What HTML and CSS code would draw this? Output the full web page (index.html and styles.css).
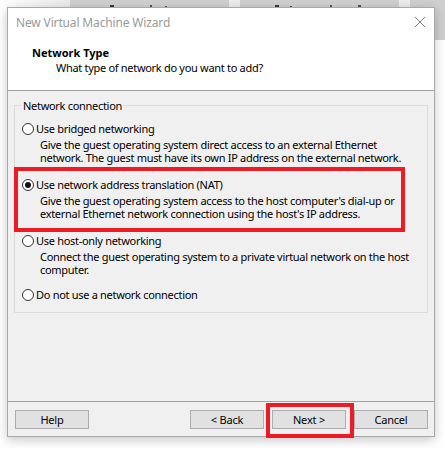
FILE: index.html
```html
<!DOCTYPE html>
<html>
<head>
<meta charset="utf-8">
<link rel="stylesheet" href="styles.css">
</head>
<body>
<div class="backdrop">
  <div class="tile tile-edge"></div>
  <div class="tile tile-a"></div>
  <div class="tile-gap"></div>
  <div class="tile tile-b"></div>
  <div class="tile-gap"></div>
  <div class="tile tile-last"></div>
</div>

<div class="dialog">
  <div class="titlebar">
    <span class="title">New Virtual Machine Wizard</span>
    <svg class="close" width="12" height="12" viewBox="0 0 12 12"><path d="M1 1 L11 11 M11 1 L1 11" stroke="#7a7a7a" stroke-width="1" fill="none"/></svg>
  </div>
  <div class="header">
    <div class="header-title">Network Type</div>
    <div class="header-sub">What type of network do you want to add?</div>
  </div>
  <div class="body">
    <fieldset class="group">
      <legend>Network connection</legend>
      <div class="option">
        <div class="radio-row"><span class="radio"></span><span>Use bridged networking</span></div>
        <div class="desc">Give the guest operating system direct access to an external Ethernet<br>network. The guest must have its own IP address on the external network.</div>
      </div>
      <div class="option">
        <div class="radio-row"><span class="radio checked"></span><span>Use network address translation (NAT)</span></div>
        <div class="desc">Give the guest operating system access to the host computer's dial-up or<br>external Ethernet network connection using the host's IP address.</div>
      </div>
      <div class="option">
        <div class="radio-row"><span class="radio"></span><span>Use host-only networking</span></div>
        <div class="desc">Connect the guest operating system to a private virtual network on the host<br>computer.</div>
      </div>
      <div class="option option-last">
        <div class="radio-row"><span class="radio"></span><span>Do not use a network connection</span></div>
      </div>
    </fieldset>
  </div>
  <div class="footer">
    <button class="btn">Help</button>
    <div class="spacer"></div>
    <button class="btn">&lt; Back</button>
    <button class="btn">Next &gt;</button>
    <button class="btn">Cancel</button>
  </div>
  <div class="mark mark-nat"></div>
  <div class="mark mark-next"></div>
</div>
</body>
</html>
```
FILE: styles.css
```css
html, body {
  margin: 0;
  padding: 0;
  background: #ffffff;
  width: 445px;
  height: 449px;
  overflow: hidden;
  font-family: "Noto Sans", "Open Sans", sans-serif;
  font-size: 11px;
  letter-spacing: -0.3px;
  color: #000;
}

.backdrop {
  display: flex;
  height: 40px;
}
.tile {
  width: 159px;
  background: #cfcfcf;
}
.tile-a {
  background:
    linear-gradient(#3a3a3a, #3a3a3a) 40px 5px / 4px 3px no-repeat,
    linear-gradient(#555, #555) 80px 5px / 2px 3px no-repeat,
    linear-gradient(#555, #555) 95px 6px / 2px 2px no-repeat,
    #cfcfcf;
}
.tile-b {
  background:
    linear-gradient(#3a3a3a, #3a3a3a) 35px 5px / 4px 3px no-repeat,
    linear-gradient(#555, #555) 50px 6px / 2px 2px no-repeat,
    linear-gradient(#555, #555) 90px 5px / 2px 3px no-repeat,
    linear-gradient(#555, #555) 118px 5px / 3px 3px no-repeat,
    #cfcfcf;
}
.tile-edge {
  width: 70px;
  background: linear-gradient(to right, #ffffff, #e9e9e9);
}
.tile-gap {
  width: 11px;
  background: #ececec;
}
.tile-last {
  flex: 1;
}

.dialog {
  position: absolute;
  left: 7px;
  top: 7px;
  width: 426px;
  height: 428px;
  border: 1px solid #a9a9a9;
  background: #f0f0f0;
  box-shadow: 0 3px 10px rgba(0,0,0,0.22);
  display: flex;
  flex-direction: column;
}

.titlebar {
  height: 29px;
  flex: none;
  background: #fff;
  display: flex;
  align-items: center;
  padding-left: 8px;
  position: relative;
}
.title {
  color: #999;
  font-size: 12px;
  letter-spacing: -0.15px;
}
.close {
  position: absolute;
  right: 8px;
  top: 8px;
}

.header {
  background: #fff;
  height: 54px;
  flex: none;
  border-bottom: 1px solid #a0a0a0;
  padding-left: 24px;
  box-sizing: border-box;
  padding-top: 8px;
}
.header-title {
  font-weight: bold;
  line-height: 15px;
  letter-spacing: 0;
}
.header-sub {
  padding-left: 24px;
  line-height: 16px;
}

.body {
  height: 310px;
  flex: none;
  padding: 0 6px;
}
.group {
  margin: 8px 0 0 0;
  padding: 10px 7px 0 7px;
  border: 1px solid #dcdcdc;
  height: 214px;
  box-sizing: border-box;
}
.group legend {
  padding: 0 1px;
  line-height: 13px;
}

.option {
  margin-bottom: 14px;
  line-height: 13px;
  white-space: nowrap;
}
.option-last {
  margin-top: -2px;
}
.radio-row {
  display: flex;
  align-items: center;
  height: 13px;
}
.radio {
  width: 12px;
  height: 12px;
  border: 1px solid #333;
  border-radius: 50%;
  background: #fff;
  margin-right: 2px;
  box-sizing: border-box;
  position: relative;
}
.radio.checked::after {
  content: "";
  position: absolute;
  left: 2px;
  top: 2px;
  width: 6px;
  height: 6px;
  border-radius: 50%;
  background: #111;
}
.desc {
  margin-top: 3px;
  padding-left: 18px;
}

.footer {
  border-top: 1px solid #a0a0a0;
  flex: 1;
  display: flex;
  align-items: flex-start;
  padding: 8px 6px 0 7px;
  gap: 8px;
}
.spacer {
  flex: 1;
}
.btn {
  width: 74px;
  height: 19px;
  background: #e1e1e1;
  border: 1px solid #adadad;
  font-family: inherit;
  font-size: 11px;
  letter-spacing: -0.2px;
  padding: 0;
  color: #000;
}

.mark {
  position: absolute;
  border: 4px solid #ed1c24;
  box-sizing: border-box;
}
.mark-nat {
  left: 6px;
  top: 159px;
  width: 391px;
  height: 65px;
}
.mark-next {
  left: 258px;
  top: 395px;
  width: 88px;
  height: 35px;
}
```
